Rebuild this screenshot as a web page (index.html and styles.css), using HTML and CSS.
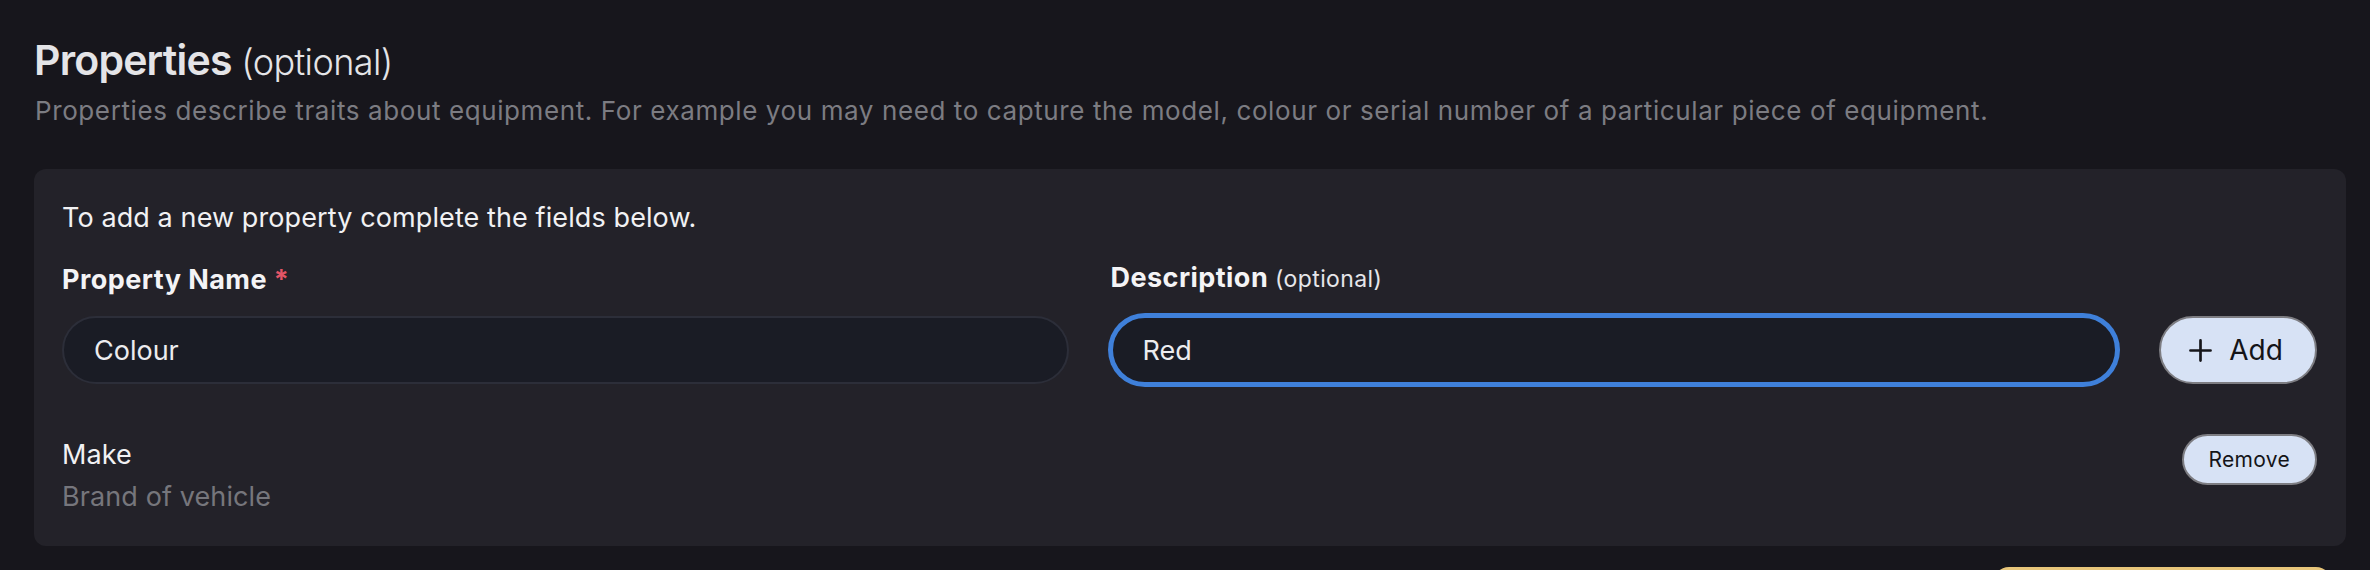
FILE: index.html
```html
<!DOCTYPE html>
<html lang="en">
<head>
<meta charset="utf-8">
<title>Properties</title>
<link rel="stylesheet" href="styles.css">
</head>
<body>
<main class="page">
  <section class="section">
    <h2 class="title">Properties <span class="title-opt">(optional)</span></h2>
    <p class="lead">Properties describe traits about equipment. For example you may need to capture the model, colour or serial number of a particular piece of equipment.</p>

    <div class="card">
      <p class="intro">To add a new property complete the fields below.</p>
      <div class="fields">
        <label class="label label-name" for="pname">Property Name <span class="req">*</span></label>
        <label class="label label-desc" for="pdesc">Description <span class="opt">(optional)</span></label>
        <input class="input input-name" id="pname" type="text" value="Colour">
        <input class="input input-desc is-focused" id="pdesc" type="text" value="Red">
        <button class="btn btn-add" type="button">
          <svg class="plus" viewBox="0 0 24 24" width="23" height="23" aria-hidden="true"><path d="M12 1.5V22.5M1.5 12H22.5" stroke="#16161a" stroke-width="2.8" stroke-linecap="round" fill="none"/></svg>
          <span>Add</span>
        </button>
      </div>
      <div class="item">
        <div class="item-text">
          <div class="item-name">Make</div>
          <div class="item-desc">Brand of vehicle</div>
        </div>
        <button class="btn btn-remove" type="button">Remove</button>
      </div>
    </div>

    <div class="footer-bar">
      <div class="footer-btn"></div>
    </div>
  </section>
</main>
</body>
</html>
```

FILE: styles.css
```css
html, body {
  margin: 0;
  padding: 0;
  overflow: hidden;
}

body {
  background: #17161c;
  font-family: Inter, "Noto Sans", "Liberation Sans", sans-serif;
  color: #ececef;
}

.page {
  padding: 35px 24px 0 34px;
}

.title {
  margin: 0;
  font-size: 41px;
  line-height: 50px;
  font-weight: 600;
  color: #e4e4e7;
  letter-spacing: -0.8px;
}

.title-opt {
  font-size: 36px;
  font-weight: 300;
  letter-spacing: -0.6px;
}

.lead {
  margin: 5px 0 0 1px;
  font-size: 26px;
  line-height: 37px;
  color: #7c7c82;
  font-weight: 400;
  letter-spacing: 0.6px;
}

.card {
  margin-top: 40px;
  background: #232229;
  border-radius: 12px;
  padding: 29px 29px 28px 28px;
}

.intro {
  margin: 0;
  font-size: 27px;
  line-height: 39px;
  color: #f1f1f3;
  letter-spacing: 0.1px;
}

.fields {
  margin-top: 21px;
  display: grid;
  grid-template-columns: 1fr 1fr 158px;
  column-gap: 42px;
  row-gap: 17px;
  align-items: end;
}

.label {
  font-size: 27px;
  line-height: 39px;
  font-weight: 700;
  color: #f4f4f6;
  letter-spacing: 0.45px;
}

.label-name { grid-column: 1; grid-row: 1; }
.label-desc { grid-column: 2; grid-row: 1; }

.req {
  color: #e25566;
  font-weight: 700;
}

.opt {
  font-weight: 400;
  font-size: 23px;
  color: #e6e6ea;
  letter-spacing: 0.4px;
}

.input {
  box-sizing: border-box;
  height: 68px;
  width: 100%;
  margin: 0;
  border-radius: 34px;
  border: 2px solid #2c2e39;
  background: #1a1c25;
  color: #ececef;
  font-family: inherit;
  font-size: 27px;
  padding: 0 30px;
  outline: none;
}

.input-name { grid-column: 1; grid-row: 2; }
.input-desc { grid-column: 2; grid-row: 2; }

.input.is-focused {
  border-color: #3f80da;
  box-shadow: 0 0 0 3px #3f80da;
}

.btn {
  font-family: inherit;
  background: #d7e2f5;
  color: #141418;
  border: 2px solid #7d7d82;
  border-radius: 999px;
  cursor: pointer;
  box-sizing: border-box;
  margin: 0;
}

.btn-add {
  grid-column: 3;
  grid-row: 2;
  height: 68px;
  display: flex;
  align-items: center;
  justify-content: center;
  gap: 17px;
  padding: 0 30px 0 26px;
  font-size: 28px;
  font-weight: 400;
}

.plus {
  display: block;
  flex: none;
}

.item {
  margin-top: 50px;
  display: flex;
  justify-content: space-between;
  align-items: flex-start;
}

.item-name {
  font-size: 27px;
  line-height: 42px;
  color: #f1f1f3;
  letter-spacing: 0.1px;
}

.item-desc {
  font-size: 27px;
  line-height: 42px;
  color: #76767c;
  letter-spacing: 0.1px;
}

.btn-remove {
  height: 51px;
  padding: 0 25px;
  font-size: 21px;
  letter-spacing: 0.3px;
}

.footer-bar {
  margin-top: 21px;
  display: flex;
  justify-content: flex-end;
  padding-right: 14px;
}

.footer-btn {
  width: 339px;
  height: 60px;
  background: #e8c67b;
  border-radius: 16px;
}
```
